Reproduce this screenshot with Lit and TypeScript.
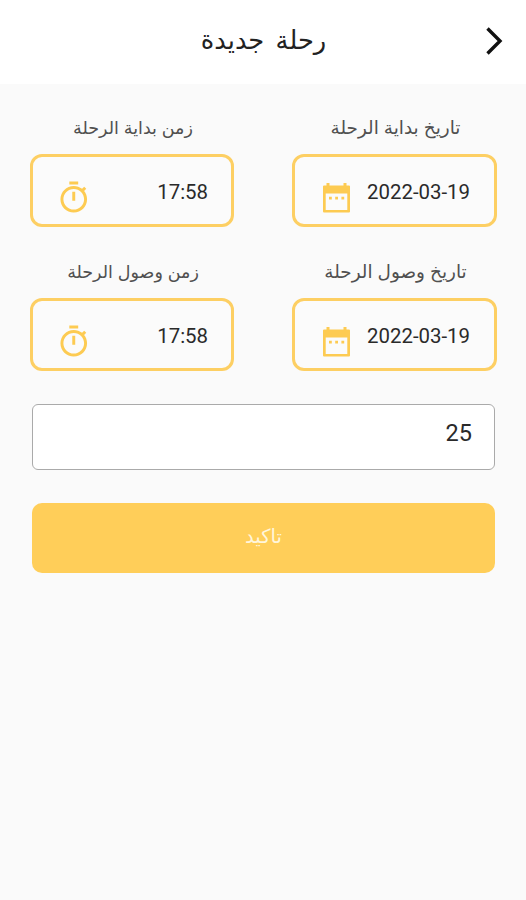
import { LitElement, html, css } from "lit";
import { customElement, property } from "lit/decorators.js";
import { classMap } from "lit/directives/class-map.js";

@customElement("trip-field")
class TripField extends LitElement {
  @property() label = "";
  @property() value = "";
  @property() kind = "date";

  static styles = css`
    :host { display: block; }
    .label { height: 44px; text-align: center; font-size: 18px; line-height: 36px; color: #505050; white-space: nowrap; }
    .label.date { font-size: 18.4px; word-spacing: 0.5px; padding-left: 2px; }
    .label.time { font-size: 17.5px; word-spacing: 0.5px; padding-left: 2px; }
    .box { box-sizing: border-box; height: 73px; border: 3px solid #fdcf63; border-radius: 12px; direction: ltr; display: flex; align-items: flex-start; justify-content: space-between; padding: 0 24px 0 0; background: #fbfbfb; }
    .time + .box { padding-right: 23px; }
    .value { font-size: 20.4px; line-height: 24px; color: #2a2a2a; margin-top: 23px; }
    svg { display: block; fill: #fdcb52; }
    .calendar { margin: 26px 0 0 28px; }
    .stopwatch { margin: 23px 0 0 22.5px; }
  `;

  render() {
    const date = this.kind === "date";
    return html`
      <div class=${classMap({ label: true, date, time: !date })}>${this.label}</div>
      <div class="box">
        ${date
          ? html`<svg class="calendar" width="27" height="30" viewBox="0 0 27 30"><path d="M1 2.500H3.500V0H6.500V2.500H20.500V0H23.500V2.500H26Q27 2.500 27 3.500V28.500Q27 29.500 26 29.500H1Q0 29.500 0 28.500V3.500Q0 2.500 1 2.500zM2.700 10.500V27H24.300V10.500z" fill-rule="evenodd"/><path d="M6 13.700h2.800v2.800H6zM12.200 13.700h2.800v2.800h-2.800zM18.400 13.700h2.800v2.800h-2.800z"/></svg>`
          : html`<svg class="stopwatch" width="35.500" height="35.500" viewBox="0 0 24 24"><path d="M15 1H9v2h6V1zm-4 13h2V8h-2v6zm8.030-6.610l1.420-1.420c-.43-.51-.9-.99-1.410-1.410l-1.420 1.420C16.070 4.740 14.120 4 12 4c-4.970 0-9 4.030-9 9s4.020 9 9 9 9-4.030 9-9c0-2.120-.74-4.070-1.970-5.610zM12 20c-3.870 0-7-3.130-7-7s3.130-7 7-7 7 3.130 7 7-3.130 7-7 7z"/></svg>`}
        <span class="value">${this.value}</span>
      </div>`;
  }
}

@customElement("app-root")
class AppRoot extends LitElement {
  static styles = css`
    :host { display: block; height: 900px; background: #fafafa; direction: rtl; font-family: Roboto, "Noto Sans", "DejaVu Sans", sans-serif; }
    header { height: 84px; background: #fff; display: grid; grid-template-columns: 64px 1fr 64px; align-items: center; }
    h1 { margin: 0; padding: 0 0 5px 1px; text-align: center; font-size: 25.7px; font-weight: 400; word-spacing: 5px; color: #222; }
    .back { display: block; margin: 0 22px 2px 0; }
    main { padding: 26px 29px 0 30px; }
    .grid { display: grid; grid-template-columns: 205px 204px; justify-content: space-between; row-gap: 27px; }
    .amount { box-sizing: border-box; height: 66px; margin: 33px 2px 0; border: 1.5px solid #aaa; border-radius: 6px; background: #fff; padding: 0 22px; font-size: 23.5px; line-height: 57px; color: #2a2a2a; }
    .confirm { display: block; width: 463px; height: 70px; margin: 32.500px 2px 0; border: 0; border-radius: 10px; background: #ffce59; color: #fff6dc; padding: 0 0 3px; font: 19.5px Roboto, "Noto Sans", "DejaVu Sans", sans-serif; }
  `;

  render() {
    return html`
      <header>
        <svg class="back" width="20" height="30" viewBox="0 0 20 30"><path d="M3.500 2.500L16 15L3.500 27.500" fill="none" stroke="#111" stroke-width="3.400"/></svg>
        <h1>رحلة جديدة</h1>
      </header>
      <main>
        <div class="grid">
          <trip-field label="تاريخ بداية الرحلة" value="2022-03-19" kind="date"></trip-field>
          <trip-field label="زمن بداية الرحلة" value="17:58" kind="time"></trip-field>
          <trip-field label="تاريخ وصول الرحلة" value="2022-03-19" kind="date"></trip-field>
          <trip-field label="زمن وصول الرحلة" value="17:58" kind="time"></trip-field>
        </div>
        <div class="amount">25</div>
        <button class="confirm">تاكيد</button>
      </main>`;
  }
}
